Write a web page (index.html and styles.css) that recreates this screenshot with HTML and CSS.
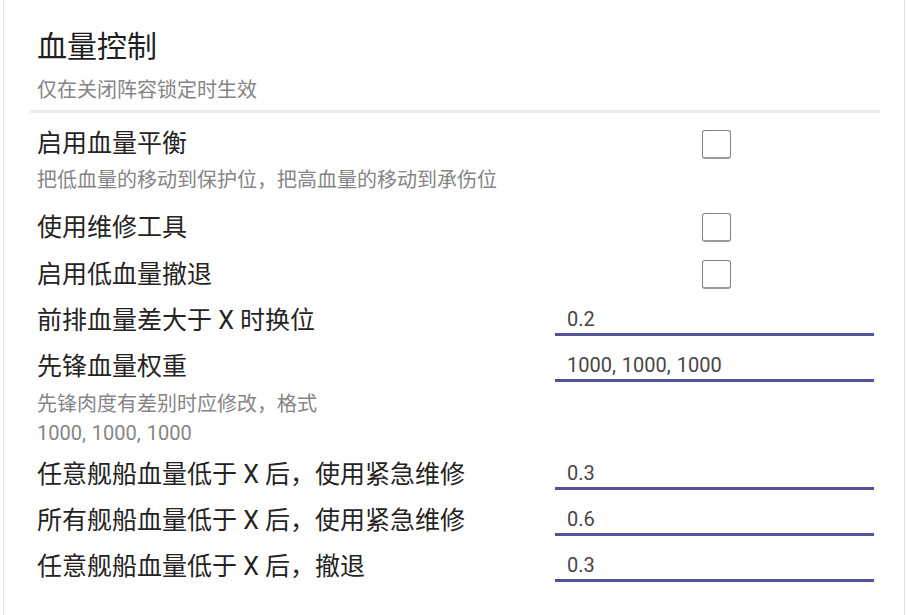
FILE: index.html
```html
<!DOCTYPE html>
<html lang="zh-CN">
<head>
<meta charset="utf-8">
<title>血量控制</title>
<link rel="stylesheet" href="styles.css">
</head>
<body>
<div class="card">
  <section class="section">
    <header class="header">
      <h1 class="title">血量控制</h1>
      <p class="subtitle">仅在关闭阵容锁定时生效</p>
    </header>
    <div class="divider"></div>
    <div class="settings">
      <div class="item">
        <div class="row">
          <span class="label">启用血量平衡</span>
          <div class="control"><span class="checkbox"></span></div>
        </div>
        <p class="desc desc-1">把低血量的移动到保护位，把高血量的移动到承伤位</p>
      </div>
      <div class="item">
        <div class="row row-check">
          <span class="label">使用维修工具</span>
          <div class="control"><span class="checkbox"></span></div>
        </div>
      </div>
      <div class="item">
        <div class="row row-check">
          <span class="label">启用低血量撤退</span>
          <div class="control"><span class="checkbox"></span></div>
        </div>
      </div>
      <div class="item">
        <div class="row">
          <span class="label">前排血量差大于 X 时换位</span>
          <div class="control"><div class="input">0.2</div></div>
        </div>
      </div>
      <div class="item">
        <div class="row">
          <span class="label">先锋血量权重</span>
          <div class="control"><div class="input">1000, 1000, 1000</div></div>
        </div>
        <p class="desc desc-2">先锋肉度有差别时应修改，格式<br>1000, 1000, 1000</p>
      </div>
      <div class="item">
        <div class="row">
          <span class="label">任意舰船血量低于 X 后，使用紧急维修</span>
          <div class="control"><div class="input">0.3</div></div>
        </div>
      </div>
      <div class="item">
        <div class="row">
          <span class="label">所有舰船血量低于 X 后，使用紧急维修</span>
          <div class="control"><div class="input">0.6</div></div>
        </div>
      </div>
      <div class="item">
        <div class="row">
          <span class="label">任意舰船血量低于 X 后，撤退</span>
          <div class="control"><div class="input">0.3</div></div>
        </div>
      </div>
    </div>
  </section>
</div>
</body>
</html>
```
FILE: styles.css
```css
* {
  box-sizing: border-box;
}

html, body {
  margin: 0;
  padding: 0;
  background: #ffffff;
}

body {
  font-family: Roboto, "Noto Sans CJK SC", sans-serif;
  color: #252423;
  overflow: hidden;
}

.card {
  margin-left: 3px;
  width: 902px;
  min-height: 615px;
  border-left: 1px solid #e3e3e3;
  border-right: 1px solid #e3e3e3;
  background: #ffffff;
}

.section {
  margin: 0 24px 0 26px;
  padding-top: 27px;
}

.header {
  padding-left: 7px;
}

.title {
  margin: 0;
  font-size: 30px;
  line-height: 40px;
  font-weight: 400;
  color: #1f1f1f;
}

.subtitle {
  margin: 8px 0 0;
  font-size: 20px;
  line-height: 30px;
  color: #858585;
}

.divider {
  margin-top: 5px;
  height: 3px;
  background: #ebebef;
}

.settings {
  padding-top: 8px;
  padding-left: 7px;
}

.row {
  display: grid;
  grid-template-columns: 1fr 325px;
  align-items: center;
  height: 46px;
}

.row-check {
  height: 47px;
}

.label {
  font-size: 25px;
  line-height: 36px;
  color: #252423;
  white-space: nowrap;
}

.control {
  display: flex;
  align-items: center;
  justify-content: center;
}

.checkbox {
  display: block;
  width: 29px;
  height: 29px;
  margin-right: 2px;
  border: 1px solid #808080;
  border-bottom-width: 2px;
  border-bottom-color: #9a9a9a;
  border-radius: 3px;
  background: #ffffff;
}

.input {
  width: 319px;
  height: 30px;
  margin-right: 6px;
  padding-left: 12px;
  border-bottom: 3px solid #53529a;
  font-size: 20px;
  line-height: 27px;
  color: #484644;
  white-space: nowrap;
  word-spacing: 1px;
}

.desc {
  margin: 0;
  font-size: 20px;
  color: #858585;
}

.desc-1 {
  line-height: 26px;
  margin-bottom: 11px;
}

.desc-2 {
  line-height: 29px;
  margin-bottom: 4px;
  word-spacing: 1px;
}
```
